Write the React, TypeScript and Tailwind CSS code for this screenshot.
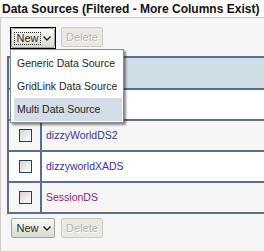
import React from 'react';

const rows = [
  { name: 'dizzyWorldDS2', visited: false },
  { name: 'dizzyworldXADS', visited: false },
  { name: 'SessionDS', visited: true },
];

function Chevron() {
  return (
    <svg width="8" height="5" viewBox="0 0 8 5" className="ml-[3px]">
      <polyline points="0.5,0.5 4,4 7.5,0.5" fill="none" stroke="#222" strokeWidth="1.4" />
    </svg>
  );
}

function NewButton({ focused }: { focused?: boolean }) {
  const btn = (
    <button className="flex items-center justify-center w-[44px] h-[20px] border border-[#a4a49c] rounded-[2px] bg-gradient-to-b from-[#fbfbf8] to-[#d9d9cf] text-[11px] text-[#2a2a2a] leading-none">
      <span className={focused ? 'outline outline-1 outline-dotted outline-[#333] px-[1px]' : 'px-[1px]'}>New</span>
      <Chevron />
    </button>
  );
  if (!focused) return btn;
  return <div className="border border-black">{btn}</div>;
}

function DeleteButton() {
  return (
    <button
      disabled
      className="w-[42px] h-[20px] border border-[#cbcbc3] rounded-[2px] bg-[#e9e9e2] text-[11px] text-[#b4b4b0] leading-none [text-shadow:1px_1px_0_#ffffff]"
    >
      Delete
    </button>
  );
}

function Checkbox() {
  return <div className="w-[13px] h-[13px] border border-[#1f3f6b] bg-gradient-to-br from-[#d6d6ce] to-white" />;
}

export default function App() {
  return (
    <div className="relative w-[264px] h-[251px] overflow-hidden bg-white font-['Liberation_Sans',Arial,sans-serif]">
      {/* title */}
      <div className="h-[17px] pl-[2px] pt-[3px] text-[12px] font-bold text-[#111] leading-none whitespace-nowrap">
        Data Sources (Filtered - More Columns Exist)
      </div>

      <div className="h-[234px] border-t border-l border-[#cacaca] bg-[#f6f6f6]">
        {/* top toolbar */}
        <div className="flex items-start gap-[5px] pl-[9px] pt-[9px] h-[38px]">
          <NewButton focused />
          <DeleteButton />
        </div>

        {/* table */}
        <div className="ml-[6px] border-t-2 border-l-2 border-[#5a6e8d]">
          <div className="h-[32px] bg-[#cfdde6] border-b-2 border-[#5a6e8d]" />
          <div className="h-[31px] bg-white border-b-2 border-[#5a6e8d] flex">
            <div className="w-[31px] border-r-2 border-[#5a6e8d]" />
          </div>
          {rows.map((r, i) => (
            <div
              key={r.name}
              className={`h-[31px] flex border-b-2 border-[#5a6e8d] ${i % 2 === 0 ? 'bg-[#f6f6f6]' : 'bg-white'}`}
            >
              <div className="w-[33px] flex items-center justify-center border-r-2 border-[#5a6e8d] pl-[1px]">
                <Checkbox />
              </div>
              <div
                className={`flex items-center pl-[4px] text-[10.5px] ${r.visited ? 'text-[#851c85]' : 'text-[#34349c]'}`}
              >
                {r.name}
              </div>
            </div>
          ))}
        </div>

        {/* bottom toolbar */}
        <div className="flex items-start gap-[6px] pl-[10px] pt-[4px]">
          <NewButton />
          <DeleteButton />
        </div>
      </div>

      {/* New dropdown menu */}
      <div className="absolute left-[10px] top-[49px] w-[114px] border border-[#8c8c8c] bg-white pt-[2px] pb-[1px] pl-[3px] pr-[1px] shadow-[2px_2px_2px_rgba(0,0,0,0.45)]">
        <div className="h-[23px] flex items-center pl-[3px] text-[10.5px] text-[#1e1e1e]">Generic Data Source</div>
        <div className="h-[23px] flex items-center pl-[3px] text-[10.5px] text-[#1e1e1e]">GridLink Data Source</div>
        <div className="h-[23px] flex items-center pl-[3px] text-[10.5px] text-[#1e1e1e] bg-[#d4dde7]">Multi Data Source</div>
      </div>
    </div>
  );
}
